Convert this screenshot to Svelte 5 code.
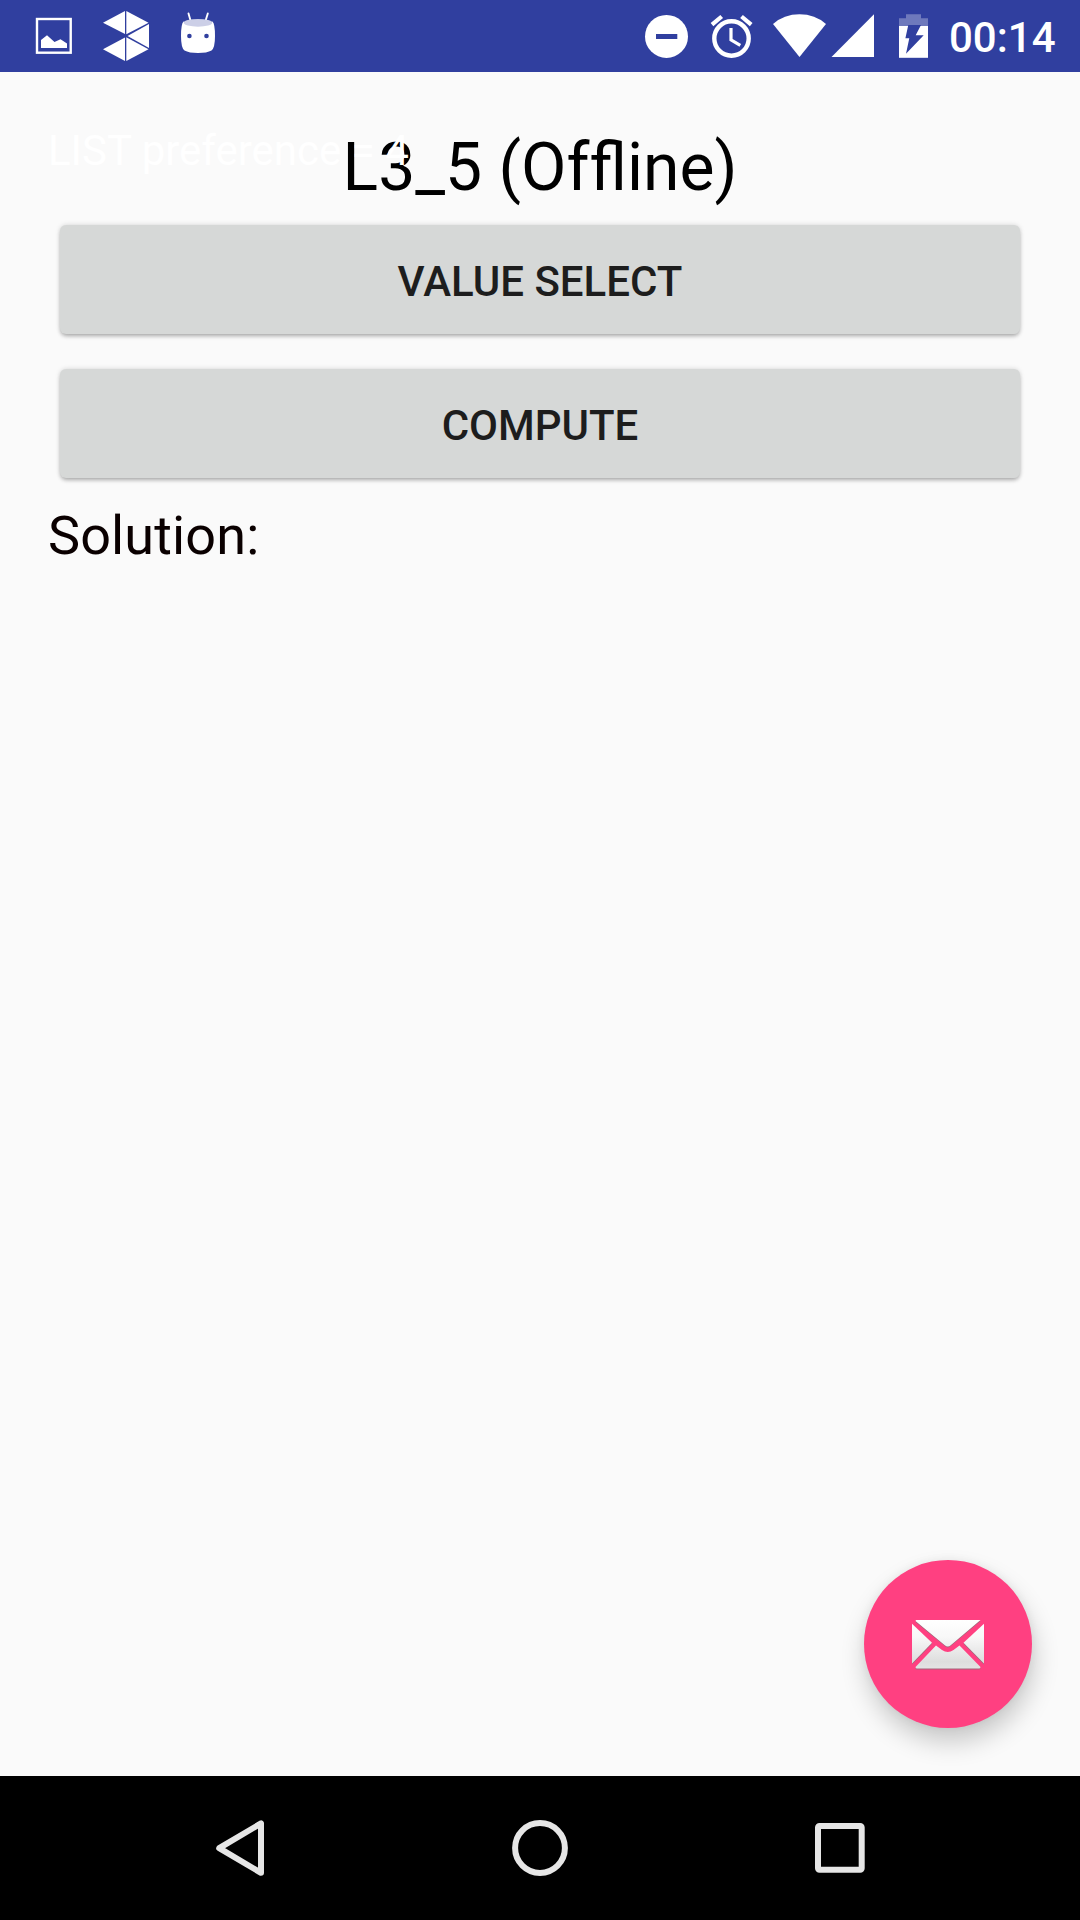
<script>
  let solution = $state('');
  const preference = 4;
  const actions = ['Value select', 'Compute'];
</script>

<div class="screen">
  <header class="status">
    <div class="group notifications">
      <svg width="36" height="72" viewBox="36 0 36 72">
        <rect x="37" y="19" width="33.7" height="33.7" fill="none" stroke="#fff" stroke-width="2.4" />
        <path d="M41 48V40L47 35.3L54.5 42L60.5 39.3L67 43.5V48Z" fill="#fff" />
      </svg>
      <svg width="46" height="72" viewBox="103 0 46 72">
        <g fill="#fff">
          <path d="M125 11V34L103 22.7Z" />
          <path d="M126.3 11L148.5 22.7L126.3 34.3Z" />
          <path d="M149 24V48L127.5 36Z" />
          <path d="M125 37.5V61L103 49.3Z" />
          <path d="M126.3 37.3L148.5 49.3L126.3 61Z" />
        </g>
      </svg>
      <svg width="36" height="72" viewBox="180 0 36 72">
        <path d="M188.5 13.5L190.8 21.5M207.8 13.5L205.3 21.5" stroke="#fff" stroke-width="1.9" stroke-linecap="round" />
        <path d="M183.5 21.5Q198 27 212.5 21.5Q215 24 215 36Q215 48 211.5 50.5Q207 53 198 53Q189 53 184.5 50.5Q181 48 181 36Q181 24 183.5 21.5Z" fill="#fff" />
        <ellipse cx="198" cy="22.8" rx="14.3" ry="3.9" fill="#cccfe7" />
        <circle cx="189.4" cy="36" r="2.3" fill="#303f9f" />
        <circle cx="206.5" cy="36" r="2.3" fill="#303f9f" />
      </svg>
    </div>
    <div class="group system">
      <svg width="44" height="72" viewBox="645 0 44 72">
        <circle cx="666.5" cy="36.4" r="21.5" fill="#fff" />
        <rect x="656" y="34" width="21.3" height="5" fill="#303f9f" />
      </svg>
      <svg width="44" height="72" viewBox="710 0 44 72">
        <circle cx="731.5" cy="38.5" r="17.2" fill="none" stroke="#fff" stroke-width="4.4" />
        <path d="M731 28V39.8L740.3 45.3" fill="none" stroke="#fff" stroke-width="3.2" />
        <path d="M712 24.6L721.7 16.5M751.2 24.6L741.5 16.5" stroke="#fff" stroke-width="4.2" />
      </svg>
      <svg class="wifi" width="53" height="72" viewBox="773 0 53 72">
        <path d="M773 24Q784 14.3 799.5 14.3Q815 14.3 826 24L799.5 57Z" fill="#fff" />
      </svg>
      <svg class="signal" width="43" height="72" viewBox="831 0 43 72">
        <path d="M831.5 57H874V14.3Z" fill="#fff" />
      </svg>
      <svg class="battery" width="29" height="72" viewBox="899 0 29 72">
        <path d="M899 26V18.3H906V14.2H921V18.3H928V26Z" fill="#fff" fill-opacity=".3" />
        <rect x="899" y="26" width="29" height="31.8" fill="#fff" />
        <path d="M908.3 25H921L915.7 35.2H923.7L906 53.7L909.3 38.3H905.4Z" fill="#303f9f" />
      </svg>
      <span class="clock">00:14</span>
    </div>
  </header>

  <main>
    <!-- The non-joiner keeps the first f apart from the fl ligature -->
    <h1>L3_5 (Of&zwnj;fline)</h1>
    <p class="preference">LIST preference = {preference}</p>
    <div class="actions">
      {#each actions as action}
        <button class="action">{action}</button>
      {/each}
    </div>
    <p class="solution">Solution: {solution}</p>

    <button class="fab" aria-label="Send mail">
      <svg width="72" height="48" viewBox="0 0 72 48">
        <defs>
          <linearGradient id="paper" gradientUnits="userSpaceOnUse" x1="0" y1="0" x2="0" y2="49">
            <stop offset="0" stop-color="#fff" />
            <stop offset=".35" stop-color="#f8f8f8" />
            <stop offset=".85" stop-color="#dedede" />
            <stop offset="1" stop-color="#e4e4e4" />
          </linearGradient>
          <g id="sheets">
            <path d="M4 0H68.5L38.7 25.2Q35.8 28 32.8 25.2L3.5 1Z" />
            <path d="M0 3.7L20 22.8L0 43.5Z" />
            <path d="M72 3.7L51.5 22.8L72 43.5Z" />
            <path d="M24 25.5L30 30Q35.8 34.2 41.5 30L47.5 25.5L68.5 47Q68.5 48.5 67 48.5H5Q3.5 48.5 3.5 47Z" />
          </g>
        </defs>
        <use href="#sheets" y="0.9" fill="#777" fill-opacity=".7" />
        <use href="#sheets" fill="url(#paper)" />
      </svg>
    </button>
  </main>

  <nav>
    <svg width="72" height="72" viewBox="0 0 72 72"><path d="M15.2 36.2L57 11.4V60.8Z" /></svg>
    <svg width="72" height="72" viewBox="0 0 72 72"><circle cx="36" cy="36" r="24.9" /></svg>
    <svg width="72" height="72" viewBox="0 0 72 72"><rect x="14" y="14" width="43.7" height="43.7" rx="1.5" /></svg>
  </nav>
</div>

<style>
  :global(body) {
    margin: 0;
  }
  .screen {
    width: 1080px;
    height: 1920px;
    display: flex;
    flex-direction: column;
    background: #fafafa;
    font-family: Roboto, sans-serif;
    overflow: hidden;
  }
  svg {
    display: block;
    flex: none;
    overflow: visible;
  }
  .status {
    height: 72px;
    box-sizing: border-box;
    padding: 0 24px 0 36px;
    display: flex;
    justify-content: space-between;
    background: #303f9f;
  }
  .group {
    display: flex;
  }
  .notifications {
    gap: 31px;
  }
  .system {
    gap: 21px;
  }
  .wifi {
    margin-left: -2px;
  }
  .signal {
    margin-left: -16px;
  }
  .battery {
    margin-left: 4px;
  }
  .clock {
    width: 107px;
    color: #fff;
    font-size: 42px;
    font-weight: 500;
    line-height: 75px;
    white-space: nowrap;
  }
  main {
    flex: 1;
    position: relative;
    padding: 48px 48px 0;
  }
  h1,
  p {
    margin: 0;
    font-weight: 400;
    white-space: nowrap;
  }
  h1 {
    font-size: 66px;
    line-height: 95px;
    text-align: center;
    color: #000;
  }
  /* Overlaps the heading */
  .preference {
    position: absolute;
    top: 48px;
    left: 48px;
    font-size: 42px;
    line-height: 61px;
    color: #fff;
  }
  .actions {
    display: flex;
    flex-direction: column;
    gap: 35px;
    padding: 10px 12px 0;
  }
  .action {
    height: 109px;
    padding: 4px 0 0;
    border: 0;
    border-radius: 6px;
    background: #d6d8d7;
    box-shadow: 0 3px 4px -1px rgba(0, 0, 0, 0.28), 0 0 5px rgba(0, 0, 0, 0.15);
    color: #1d1d1d;
    font: 500 42px/60px Roboto, sans-serif;
    text-transform: uppercase;
  }
  .solution {
    margin-top: 25px;
    font-size: 54px;
    line-height: 65px;
    letter-spacing: 0.12px;
    color: #0a0000;
  }
  .fab {
    position: absolute;
    right: 48px;
    bottom: 48px;
    width: 168px;
    height: 168px;
    padding: 0;
    border: 0;
    border-radius: 50%;
    background: #ff4081;
    box-shadow: 2px 14px 26px rgba(0, 0, 0, 0.2), 0 0 10px rgba(0, 0, 0, 0.06);
    display: flex;
    align-items: center;
    justify-content: center;
  }
  nav {
    height: 144px;
    display: grid;
    grid-template-columns: repeat(3, 300px);
    justify-content: center;
    align-items: center;
    justify-items: center;
    background: #000;
  }
  nav svg {
    fill: none;
    stroke: #e6e6e6;
    stroke-width: 6;
    stroke-linejoin: round;
  }
</style>
